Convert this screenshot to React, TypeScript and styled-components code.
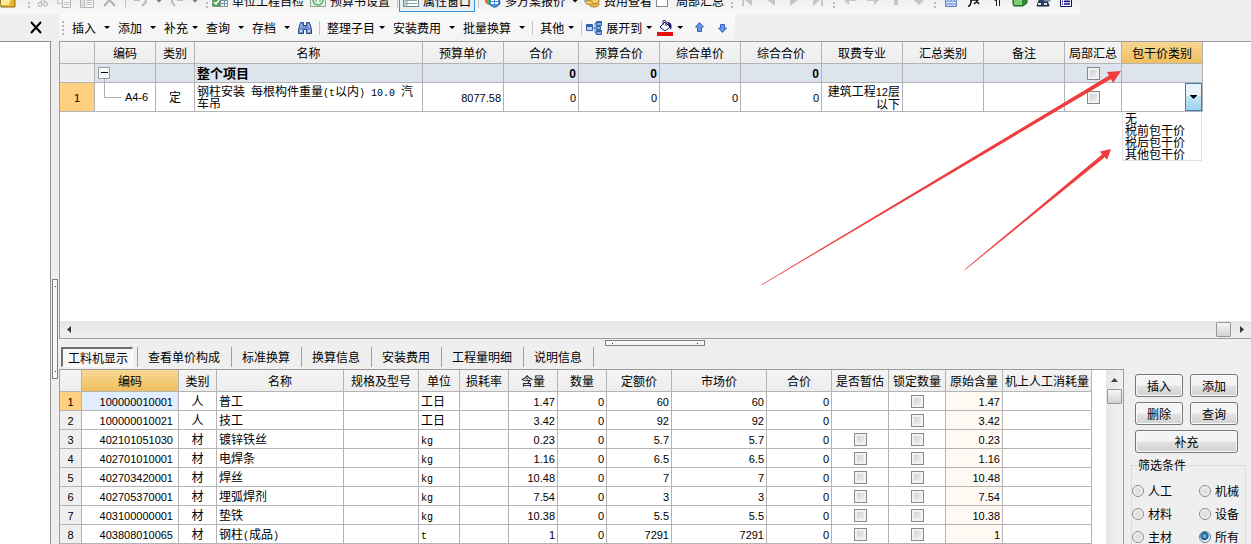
import React from "react";
import styled, { createGlobalStyle, css } from "styled-components";

const GlobalStyle = createGlobalStyle`
  *, *::before, *::after { box-sizing: border-box; }
  html, body, #root { height: 100%; }
  body { margin: 0; background: #efefef; overflow: hidden; }
  body, button, input, select {
    font-family: "Noto Sans CJK SC", "Liberation Sans", sans-serif;
    font-size: 12px;
    line-height: 16px;
    color: #000;
  }
`;

const line = "#b4b4b4";

/* ---------- shell ---------- */

const Page = styled.div`
  position: relative;
  display: flex;
  flex-direction: column;
  height: 100vh;
  overflow: hidden;
`;

const Body = styled.div`
  display: flex;
  flex: 1;
  min-height: 0;
`;

const SidePane = styled.aside`
  display: flex;
  flex-direction: column;
  width: 51px;
  flex: none;
`;

const SideHeader = styled.div`
  display: flex;
  align-items: center;
  justify-content: flex-end;
  height: 27px;
  padding-right: 8px;
`;

const SideBody = styled.div`
  flex: 1;
  background: #fff;
  border-top: 1px solid #8f8f8f;
  border-right: 1px solid #8f8f8f;
`;

const PlainButton = styled.button`
  display: flex;
  align-items: center;
  padding: 0;
  border: 0;
  background: none;
  white-space: nowrap;
`;

const Gutter = styled.div`
  display: flex;
  flex-direction: column;
  align-items: center;
  width: 8px;
  flex: none;
  padding-top: 265px;
`;

const handle = css`
  display: flex;
  justify-content: space-between;
  border: 1px solid #808080;
  background: #f6f6f6;
  &::before, &::after {
    content: "";
    width: 1px;
    height: 1px;
    background: #333;
  }
`;

const VHandle = styled.div`
  ${handle}
  flex-direction: column;
  align-items: center;
  width: 6px;
  height: 100px;
  padding: 6px 0;
`;

const Main = styled.main`
  display: flex;
  flex-direction: column;
  flex: 1;
  min-width: 0;
`;

/* ---------- toolbars ---------- */

const TopBar = styled.div`
  display: flex;
  align-items: flex-end;
  align-self: flex-start;
  height: 14px;
  flex: none;
  overflow: hidden;
  padding: 0 6px 4px 0;
  background: linear-gradient(#f1f1f1, #f8f8f8);
`;

const ToolGroup = styled.div<{ $gap?: number; $pad?: number }>`
  display: flex;
  align-items: center;
  gap: ${(p) => p.$gap ?? 4}px;
  padding-left: ${(p) => p.$pad ?? 0}px;
  height: 18px;
  flex: none;
  white-space: nowrap;
`;

const Grip = styled.span`
  width: 2px;
  height: 14px;
  flex: none;
  background: repeating-linear-gradient(#b9b9b9 0 2px, transparent 2px 4px);
`;

const Divider = styled.span`
  width: 1px;
  height: 14px;
  flex: none;
  background: #c4c4c4;
`;

const Active = styled(PlainButton)`
  gap: 4px;
  height: 22px;
  padding: 0 3px;
  border: 1px solid #3c93dc;
  background: #e6eff8;
`;

const CheckLabel = styled.label`
  display: flex;
  align-items: center;
  gap: 8px;
`;

const ToolBar = styled.div`
  display: flex;
  align-items: center;
  align-self: flex-start;
  height: 27px;
  flex: none;
  padding: 0 6px 0 3px;
  background: linear-gradient(#fafafa, #f3f3f3);
`;

const MenuButton = styled(PlainButton)<{ $tight?: boolean; $near?: boolean }>`
  gap: ${(p) => (p.$tight ? 4 : 8)}px;
  margin-left: ${(p) => (p.$near ? 5 : 8)}px;
`;

const Caret = styled.span<{ $dim?: boolean; $large?: boolean }>`
  width: ${(p) => (p.$large ? 8 : 6)}px;
  height: ${(p) => (p.$large ? 4 : 3)}px;
  flex: none;
  background: ${(p) => (p.$dim ? "#777" : "#000")};
  clip-path: polygon(0 0, 100% 0, 50% 100%);
`;

const BarDivider = styled(Divider)`
  margin: 0 -1px 0 7px;
`;

const IconButton = styled(PlainButton)<{ $far?: boolean }>`
  margin-left: ${(p) => (p.$far ? 10 : 8)}px;
`;

/* ---------- grids ---------- */

const Upper = styled.section`
  display: flex;
  flex-direction: column;
  height: 298px;
  flex: none;
  background: #fff;
  border-top: 1px solid #9c9c9c;
  border-left: 1px solid #9c9c9c;
  border-bottom: 1px solid #9c9c9c;
`;

const GridView = styled.div`
  flex: 1;
  min-height: 0;
  overflow: hidden;
`;

const Grid = styled.table`
  table-layout: fixed;
  border-collapse: separate;
  border-spacing: 0;
  width: 0;
  line-height: 12px;
`;

const Th = styled.th<{ $on?: boolean }>`
  height: 22px;
  padding: 0;
  font-weight: normal;
  white-space: nowrap;
  background: ${(p) => (p.$on ? "linear-gradient(#f7d794, #efbf5f)" : "linear-gradient(#f4f4f4, #ededed)")};
  border-right: 1px solid ${line};
  border-bottom: 1px solid ${line};
`;

const Td = styled.td<{ $align?: string; $h?: number; $bg?: string; $pad?: number }>`
  height: ${(p) => p.$h ?? 19}px;
  padding: 0 ${(p) => p.$pad ?? 2}px;
  text-align: ${(p) => p.$align ?? "left"};
  background: ${(p) => p.$bg ?? "#fff"};
  border-right: 1px solid ${line};
  border-bottom: 1px solid ${line};
  white-space: ${(p) => (p.$h ? "normal" : "nowrap")};
  line-height: 12px;
`;

const Num = styled.span`
  font-family: "Liberation Sans", sans-serif;
  font-size: 11px;
`;

const Mono = styled.span`
  font-family: "Liberation Mono", monospace;
  font-size: 10px;
  line-height: 1px;
`;

const Strong = styled.strong`
  font-size: 13px;
`;

const StrongNum = styled.strong`
  font-family: "Liberation Sans", sans-serif;
  font-size: 12px;
`;

const CheckBox = styled.input.attrs({ type: "checkbox" })<{ $plain?: boolean }>`
  appearance: none;
  display: block;
  width: ${(p) => (p.$plain ? 12 : 13)}px;
  height: ${(p) => (p.$plain ? 12 : 13)}px;
  margin: 0 auto;
  border: 1px solid #8a8a8a;
  background: ${(p) => (p.$plain ? "#fff" : "linear-gradient(135deg, #c6cacd, #f8f8f8)")};
  box-shadow: inset 0 0 0 ${(p) => (p.$plain ? 0 : 2)}px #f2f2f2;
`;

const TreeCell = styled.div`
  display: flex;
  align-items: center;
  padding-left: 1px;
`;

const Combo = styled.div`
  position: relative;
  display: flex;
  height: 28px;
`;

const ComboSelect = styled.select`
  appearance: none;
  flex: 1;
  min-width: 0;
  border: 0;
  padding: 0;
  background: #fff;
`;

const ComboButton = styled.span`
  display: flex;
  align-items: center;
  justify-content: center;
  width: 17px;
  border: 1px solid #3c7fb1;
  background: linear-gradient(#e6f4fc 0 45%, #c4e5f6 45%, #9bd1f0);
`;

const Options = styled.ul`
  position: absolute;
  top: 29px;
  left: 0;
  width: 80px;
  margin: 0;
  padding: 0 0 0 2px;
  list-style: none;
  line-height: 12px;
  text-align: left;
  background: #fff;
  border: 1px solid #e2e2e2;
  border-top: 0;
`;

const HScroll = styled.div`
  display: flex;
  align-items: center;
  justify-content: space-between;
  height: 17px;
  flex: none;
  padding: 0 6px;
  background: linear-gradient(#e7e7e7, #efefef);
`;

const ScrollEnd = styled.div`
  display: flex;
  align-items: center;
  gap: 8px;
`;

const Thumb = styled.span`
  width: 15px;
  height: 15px;
  border: 1px solid #979797;
  border-radius: 1px;
  background: linear-gradient(#f6f6f6, #d2d2d2);
`;

const Lower = styled.section`
  display: flex;
  flex-direction: column;
  flex: 1;
  min-height: 0;
`;

const HHandleRow = styled.div`
  display: flex;
  justify-content: center;
  height: 7px;
  padding-top: 1px;
`;

const HHandle = styled.div`
  ${handle}
  align-items: center;
  width: 100px;
  height: 6px;
  padding: 0 6px;
`;

const Tabs = styled.div`
  display: flex;
  align-items: center;
  height: 23px;
  flex: none;
  padding: 0 0 1px 2px;
`;

const Tab = styled.button<{ $on?: boolean }>`
  height: 20px;
  padding: 0;
  border: 0;
  margin: 0 11px 0 10px;
  background: none;
  white-space: nowrap;
  ${(p) =>
    p.$on &&
    css`
      margin: 0 4px 0 0;
      padding: 0 4px 0 5px;
      border: 1px solid #fff;
      border-top: 2px solid #6e6e6e;
      border-left: 2px solid #6e6e6e;
      background: #f6f6f6;
    `}
`;

const TabLine = styled.span`
  width: 1px;
  height: 20px;
  background: #a0a0a0;
`;

const LowerBody = styled.div`
  display: flex;
  flex: 1;
  min-height: 0;
`;

const LowerGrid = styled.div`
  display: flex;
  flex: 1;
  min-width: 0;
  background: #fff;
  border: 1px solid #9c9c9c;
  border-bottom: 0;
  overflow: hidden;
`;

const VScroll = styled.div`
  display: flex;
  flex-direction: column;
  align-items: center;
  gap: 7px;
  width: 17px;
  flex: none;
  padding-top: 8px;
  background: linear-gradient(90deg, #e7e7e7, #f1f1f1);
`;

const Actions = styled.aside`
  display: flex;
  flex-direction: column;
  width: 127px;
  flex: none;
  padding: 4px 5px 0 7px;
`;

const ButtonGrid = styled.div`
  display: grid;
  grid-template-columns: 1fr 1fr;
  gap: 5px 7px;
  padding: 1px 8px 0 4px;
`;

const ActionButton = styled.button<{ $wide?: boolean }>`
  grid-column: ${(p) => (p.$wide ? "span 2" : "auto")};
  height: 23px;
  padding: 0;
  border: 1px solid #787878;
  border-radius: 3px;
  background: linear-gradient(#f4f4f4 0 48%, #e2e2e2 52%, #d2d2d2);
  box-shadow: inset 0 0 0 1px #fafafa;
`;

const Filter = styled.fieldset`
  display: grid;
  grid-template-columns: 67px 1fr;
  row-gap: 7px;
  min-width: 0;
  height: 100px;
  margin: 4px 0 0;
  padding: 10px 0 0;
  border: 1px solid #dcdcdc;
  border-bottom: 0;
  align-content: start;
`;

const Legend = styled.legend`
  margin-left: 5px;
  padding: 0 1px;
`;

const RadioLabel = styled.label`
  display: flex;
  align-items: center;
  gap: 4px;
  white-space: nowrap;
`;

const Radio = styled.input.attrs({ type: "radio" })`
  appearance: none;
  width: 12px;
  height: 12px;
  margin: 0;
  border: 1px solid #8c8c8c;
  border-radius: 50%;
  background: radial-gradient(#dedede 0 30%, #f6f6f6 70%);
  &:checked {
    border-color: #5c7f9c;
    background: radial-gradient(circle at 45% 40%, #5fb4e4 0 10%, #15507e 45%, #e8f0f6 56%);
  }
`;

const Marks = styled.svg`
  position: absolute;
  left: 0;
  top: 0;
  pointer-events: none;
`;

/* ---------- icons ---------- */

const Svg = ({ w = 16, h = 16, children }: { w?: number; h?: number; children: React.ReactNode }) => (
  <svg width={w} height={h} viewBox={`0 0 ${w} ${h}`} fill="none" aria-hidden="true">
    {children}
  </svg>
);

const FolderIcon = () => (
  <Svg>
    <path d="M0 1h15v13H1z" fill="#e8b52f" stroke="#8f6a12" />
    <path d="M1 2h11L9 12H1z" fill="#fdeaa0" />
  </Svg>
);
const CutIcon = () => (
  <Svg w={12}>
    <path d="M3 0l5 9M9 0L4 9" stroke="#a8a8a8" />
    <circle cx="3" cy="11.5" r="2" stroke="#a8a8a8" />
    <circle cx="8.5" cy="11" r="2" stroke="#a8a8a8" />
  </Svg>
);
const CopyIcon = () => (
  <Svg>
    <path d="M1.500 .5h8v10h-8z" fill="#f0f0f0" stroke="#bdbdbd" />
    <path d="M6.500 3.500h8v11h-8z" fill="#f4f4f4" stroke="#b5b5b5" />
    <path d="M8 6.500h5M8 9.500h5M8 11.500h5" stroke="#c4c4c4" />
  </Svg>
);
const PasteIcon = () => (
  <Svg>
    <path d="M1.500 .5h11v14h-11z" fill="#e2e2e2" stroke="#b5b5b5" />
    <path d="M5.500 4.500h9v10h-9z" fill="#f6f6f6" stroke="#b5b5b5" />
    <path d="M7 7.500h6M7 9.500h6M7 11.500h6" stroke="#c4c4c4" />
  </Svg>
);
const DeleteIcon = () => (
  <Svg>
    <path d="M2 1l11 12M13 1L2 13" stroke="#b0b0b0" strokeWidth="2" />
  </Svg>
);
const UndoIcon = ({ flip }: { flip?: boolean }) => (
  <Svg>
    <path
      d={flip ? "M13 2v5H8M13 7C9 2 3 4 3 9l3 4" : "M2 2v5h5M2 7c4-5 11-3 11 2l-4 4"}
      stroke="#bababa"
      strokeWidth="2"
    />
  </Svg>
);
const SheetCheckIcon = () => (
  <Svg>
    <path d="M.5 1.500h15v12H.5z" fill="#eef4ee" stroke="#7c9a86" />
    <path d="M8 7.500h7M8 10.500h7M8.500 2v11M12.500 2v11" stroke="#7897ac" />
    <path d="M1 6h7v7H1z" fill="#4ba83c" />
    <path d="M2 9l2 2 3-4" stroke="#fff" strokeWidth="1.500" />
  </Svg>
);
const GearSheetIcon = () => (
  <Svg>
    <path d="M.5 .5h15v13H.5z" fill="#e3f2e3" stroke="#8aa894" />
    <circle cx="8" cy="7" r="5" stroke="#57ab68" strokeWidth="1.500" />
    <path d="M6 9V6l2-2 2 2v3" stroke="#57ab68" />
  </Svg>
);
const PropsIcon = () => (
  <Svg>
    <path d="M.5 1.500h15v12H.5z" fill="#fff" stroke="#6f8a8f" />
    <path d="M1 2h4v11H1z" fill="#b8d6c2" />
    <path d="M2 4.500h12M2 7.500h12M2 10.500h12" stroke="#8aa3ad" />
  </Svg>
);
const QuoteIcon = () => (
  <Svg>
    <path d="M4 1h10l1 10-4 3H8l-4-3z" fill="#4c8fdd" stroke="#2a62ab" />
    <path d="M6 3h7v8H6z" fill="#fff" />
    <path d="M6 5.500h7M6 8.500h7M9.500 3v8" stroke="#4c8fdd" />
    <path d="M0 3h2v8L0 9z" fill="#e06a2a" />
    <path d="M2 4h2v8l-2-1z" fill="#58b158" />
  </Svg>
);
const CoinsIcon = () => (
  <Svg>
    <path d="M0 1h8v8H0z" fill="#8cb5dd" />
    <ellipse cx="10" cy="11" rx="5" ry="3" fill="#e9bb4b" stroke="#a97f20" />
    <ellipse cx="10" cy="8" rx="5" ry="3" fill="#f3cf6c" stroke="#a97f20" />
    <ellipse cx="5" cy="9.500" rx="3.500" ry="2" fill="#f3cf6c" stroke="#b98c2a" />
  </Svg>
);
const NavIcon = ({ d }: { d: string }) => (
  <Svg>
    <path d={d} fill="#c6c6c6" />
  </Svg>
);
const CalcIcon = () => (
  <Svg>
    <path d="M2.500 .5h11v13h-11z" fill="#a9c3ee" stroke="#6580b8" />
    <path d="M4 7h8M4 9.500h8M4 12h8" stroke="#fff" strokeDasharray="2 1" />
    <path d="M4 8h8M4 11h8" stroke="#5c7fc9" strokeDasharray="2 1" />
  </Svg>
);
const FxIcon = () => (
  <Svg>
    <path d="M2 13c3 1 3-6 5-12h3M4 7h6M8 11l6-6M9 6l4 5" stroke="#111" strokeWidth="1.500" />
  </Svg>
);
const ParaIcon = () => (
  <Svg>
    <path d="M7.500 1v12M10.500 1v12M5 1.500h8" stroke="#222" />
    <path d="M4 2h3v6C5 8 4 6 4 2z" fill="#222" />
  </Svg>
);
const CubeIcon = () => (
  <Svg>
    <path d="M1 2l9-1 5 1v8l-4 3H2l-1-2z" fill="#2f8b31" stroke="#175a1c" />
    <path d="M2 3h8v9H2z" fill="#7fd06c" />
  </Svg>
);
const FindIcon = () => (
  <Svg>
    <path d="M2 13l3-8h6l3 8z" fill="#2d3f5c" stroke="#16202f" />
    <path d="M3 10h3v2H3zM9 10h3v2H9z" fill="#cfe0f7" />
    <path d="M9 2h6v6H9z" fill="#a7bfe4" stroke="#54709c" />
  </Svg>
);
const BinocularsIcon = () => (
  <Svg w={14}>
    <path d="M2.500 2.500h3v3h3v-3h3l2 7v4h-5v-4h-3v4h-5v-4z" fill="#6b8dcc" stroke="#2c4a86" />
    <path d="M2 10h2v2H2zM10 10h2v2h-2z" fill="#cfe0f7" />
    <path d="M3.500 4l-1 4M10.500 4l1 4" stroke="#b7cdf2" />
  </Svg>
);
const ListIcon = () => (
  <Svg>
    <path d="M2.500 .5h11v13h-11z" fill="#fff" stroke="#10105c" />
    <path d="M4 3.500h1M4 6.500h1M4 8.500h1M4 11h1M6 3.500h6M6 6.500h6M6 8.500h6M6 11h6" stroke="#10108c" strokeWidth="1.500" />
  </Svg>
);
const TreeIcon = () => (
  <Svg>
    <path d="M6 8h3M9 3v10M9 3h2M9 8h2M9 13h2" stroke="#4a78b8" />
    <path d="M.5 4.500h6v6h-6z" fill="#b4d0f2" stroke="#2f62a8" />
    <path d="M10.500 1.500h5v4h-5zM10.500 10.500h5v4h-5z" fill="#7fb0e8" stroke="#2f62a8" />
    <path d="M10.500 6.500h4v3h-4z" fill="#7fb0e8" stroke="#2f62a8" />
    <path d="M1 5h5v2H1zM11 2h4v1h-4zM11 11h4v1h-4z" fill="#2f62a8" />
  </Svg>
);
const FillIcon = () => (
  <Svg h={18}>
    <path d="M3 8l5-5 5 5-5 4z" fill="#fff" stroke="#16166a" />
    <path d="M6 6V2c0-1 3-1 3 1v4" stroke="#16166a" />
    <path d="M10 3c5 0 5 4 4 8l-2-4z" fill="#16166a" />
    <path d="M0 13h16v4H0z" fill="#e60f0f" />
  </Svg>
);
const ArrowIcon = ({ down }: { down?: boolean }) => (
  <Svg w={13} h={13}>
    <path
      d={down ? "M6.500 11.500l4-4.500H8.500V3.500h-4V7H2.500z" : "M6.500 1.500l4 4.500H8.500v4.500h-4V6H2.500z"}
      fill="#6595ea"
      stroke="#3564c4"
    />
  </Svg>
);
const CloseIcon = () => (
  <Svg w={14} h={14}>
    <path d="M2 1l10 11M12 1L2 12" stroke="#000" strokeWidth="2" />
  </Svg>
);

/* ---------- data ---------- */

const upperCols: [string, number][] = [
  ["", 35], ["编码", 61], ["类别", 39], ["名称", 228], ["预算单价", 81], ["合价", 75], ["预算合价", 81],
  ["综合单价", 81], ["综合合价", 81], ["取费专业", 81], ["汇总类别", 81], ["备注", 81], ["局部汇总", 57], ["包干价类别", 81],
];

const lowerCols: [string, number][] = [
  ["", 22], ["编码", 97], ["类别", 38], ["名称", 127], ["规格及型号", 75], ["单位", 41], ["损耗率", 49], ["含量", 49],
  ["数量", 49], ["定额价", 65], ["市场价", 95], ["合价", 65], ["是否暂估", 57], ["锁定数量", 57], ["原始含量", 57],
  ["机上人工消耗量", 89],
];

const materials: [string, string, string, string, string, string, boolean][] = [
  ["100000010001", "人", "普工", "工日", "1.47", "60", false],
  ["100000010021", "人", "技工", "工日", "3.42", "92", false],
  ["402101051030", "材", "镀锌铁丝", "kg", "0.23", "5.7", true],
  ["402701010001", "材", "电焊条", "kg", "1.16", "6.5", true],
  ["402703420001", "材", "焊丝", "kg", "10.48", "7", true],
  ["402705370001", "材", "埋弧焊剂", "kg", "7.54", "3", true],
  ["403100000001", "材", "垫铁", "kg", "10.38", "5.5", true],
  ["403808010065", "材", "钢柱(成品)", "t", "1", "7291", true],
];

const tabs = ["查看单价构成", "标准换算", "换算信息", "安装费用", "工程量明细", "说明信息"];

const options = ["无", "税前包干价", "税后包干价", "其他包干价"];

const mixed = (text: string) =>
  text.split(/([\x20-\x7e]+)/).map((part, i) => (i % 2 ? <Mono key={i}>{part}</Mono> : part));

const Head = ({ cols, active }: { cols: [string, number][]; active: number }) => (
  <>
    <colgroup>
      {cols.map(([, w], i) => (
        <col key={i} width={w} />
      ))}
    </colgroup>
    <thead>
      <tr>
        {cols.map(([name], i) => (
          <Th key={i} $on={i === active}>
            {name}
          </Th>
        ))}
      </tr>
    </thead>
  </>
);

const summary = "#dde4ee";
const marker = "#ffd080";

const UpperTable = () => (
  <Grid>
    <Head cols={upperCols} active={13} />
    <tbody>
      <tr>
        <Td $bg="#efefef" />
        <Td $bg={summary}>
          <TreeCell>
            <Svg w={12} h={18}>
              <path d="M.5 3.500h11v11H.5z" fill="#f8f8f8" stroke="#9a9a9a" />
              <path d="M3 8.500h7" stroke="#000" />
              <path d="M6.500 15v3" stroke="#b0b0b0" />
            </Svg>
          </TreeCell>
        </Td>
        <Td $bg={summary} />
        <Td $bg={summary}>
          <Strong>整个项目</Strong>
        </Td>
        <Td $bg={summary} />
        {["0", "0", "", "0"].map((v, i) => (
          <Td key={i} $bg={summary} $align="right">
            <StrongNum>{v}</StrongNum>
          </Td>
        ))}
        <Td $bg={summary} />
        <Td $bg={summary} />
        <Td $bg={summary} />
        <Td $bg={summary}>
          <CheckBox aria-label="局部汇总" />
        </Td>
        <Td $bg={summary} />
      </tr>
      <tr>
        <Td $h={29} $align="center" $bg={marker}>
          <Num>1</Num>
        </Td>
        <Td $h={29}>
          <TreeCell>
            <Svg w={27} h={28}>
              <path d="M6.500 0v14.500H23" stroke="#b0b0b0" />
            </Svg>
            <Num>A4-6</Num>
          </TreeCell>
        </Td>
        <Td $h={29} $align="center">定</Td>
        <Td $h={29}>{mixed("钢柱安装 每根构件重量(t以内) 10.0 汽车吊")}</Td>
        {["8077.58", "0", "0", "0", "0"].map((v, i) => (
          <Td key={i} $h={29} $align="right">
            <Num>{v}</Num>
          </Td>
        ))}
        <Td $h={29} $align="right">
          建筑工程<Num>12</Num>层以下
        </Td>
        <Td $h={29} />
        <Td $h={29} />
        <Td $h={29}>
          <CheckBox aria-label="局部汇总" />
        </Td>
        <Td $h={29} $pad={0}>
          <Combo>
            <ComboSelect aria-label="包干价类别" defaultValue="">
              <option value="" />
            </ComboSelect>
            <ComboButton>
              <Caret $large />
            </ComboButton>
            <Options role="listbox" aria-label="包干价类别">
              {options.map((o) => (
                <li key={o} role="option" aria-selected="false">
                  {o}
                </li>
              ))}
            </Options>
          </Combo>
        </Td>
      </tr>
    </tbody>
  </Grid>
);

const LowerTable = () => (
  <Grid>
    <Head cols={lowerCols} active={1} />
    <tbody>
      {materials.map(([code, kind, name, unit, qty, price, est], i) => (
        <tr key={code}>
          <Td $align="center" $bg={i === 0 ? marker : "#efefef"}>
            <Num>{i + 1}</Num>
          </Td>
          <Td $align="right" $pad={5} $bg={i === 0 ? "#e0eeff" : undefined}>
            <Num>{code}</Num>
          </Td>
          <Td $align="center">{kind}</Td>
          <Td>{mixed(name)}</Td>
          <Td />
          <Td>{mixed(unit)}</Td>
          <Td />
          <Td $align="right"><Num>{qty}</Num></Td>
          <Td $align="right"><Num>0</Num></Td>
          <Td $align="right"><Num>{price}</Num></Td>
          <Td $align="right"><Num>{price}</Num></Td>
          <Td $align="right"><Num>0</Num></Td>
          <Td>{est && <CheckBox aria-label="是否暂估" />}</Td>
          <Td>
            <CheckBox aria-label="锁定数量" />
          </Td>
          <Td $align="right" $bg="#fff9f4"><Num>{qty}</Num></Td>
          <Td />
        </tr>
      ))}
    </tbody>
  </Grid>
);

const Menu = ({ text, tight }: { text: string; tight?: boolean }) => (
  <MenuButton $tight={tight}>
    {text}
    <Caret />
  </MenuButton>
);

export default function App() {
  return (
    <Page>
      <GlobalStyle />
      <TopBar>
        <ToolGroup $gap={7}>
          <FolderIcon />
          <ToolGroup $pad={5}>
            <Grip />
          </ToolGroup>
          <CutIcon />
          <CopyIcon />
          <PasteIcon />
          <DeleteIcon />
          <Divider />
          <UndoIcon />
          <Caret $dim />
          <UndoIcon flip />
          <Caret $dim />
        </ToolGroup>
        <ToolGroup $pad={8}>
          <Grip />
          <SheetCheckIcon />
          <span>单位工程自检</span>
        </ToolGroup>
        <ToolGroup $pad={6}>
          <GearSheetIcon />
          <span>预算书设置</span>
        </ToolGroup>
        <ToolGroup $pad={7} $gap={1}>
          <Divider />
          <Active>
            <PropsIcon />
            属性窗口
          </Active>
        </ToolGroup>
        <ToolGroup $pad={3}>
          <Divider />
        </ToolGroup>
        <ToolGroup $pad={6}>
          <QuoteIcon />
          <span>多方案报价</span>
          <ToolGroup $pad={3}>
            <Caret />
          </ToolGroup>
        </ToolGroup>
        <ToolGroup $pad={6}>
          <CoinsIcon />
          <span>费用查看</span>
          <CheckLabel>
            <CheckBox $plain />
            局部汇总
          </CheckLabel>
        </ToolGroup>
        <ToolGroup $pad={7} $gap={7}>
          <Grip />
          <NavIcon d="M2 1h2v12H2zM12 1v12L5 7z" />
          <NavIcon d="M12 1v12L4 7z" />
          <NavIcon d="M4 1v12l8-6z" />
          <NavIcon d="M4 1v12l7-6zM12 1h2v12h-2z" />
        </ToolGroup>
        <ToolGroup $pad={8} $gap={7}>
          <Grip />
          <NavIcon d="M1 6l6-6v4h7v4H7v4z" />
          <NavIcon d="M15 6L9 0v4H2v4h7v4z" />
          <NavIcon d="M8 0l5 6h-3v6H6V6H3z" />
          <NavIcon d="M8 12l6-6h-4V0H6v6H2z" />
        </ToolGroup>
        <ToolGroup $pad={7} $gap={7}>
          <Grip />
          <CalcIcon />
          <FxIcon />
          <ParaIcon />
          <CubeIcon />
          <FindIcon />
          <ListIcon />
        </ToolGroup>
      </TopBar>
      <Body>
        <SidePane>
          <SideHeader>
            <PlainButton aria-label="关闭">
              <CloseIcon />
            </PlainButton>
          </SideHeader>
          <SideBody />
        </SidePane>
        <Gutter>
          <VHandle />
        </Gutter>
        <Main>
          <ToolBar>
            <Grip />
            <Menu text="插入" />
            <Menu text="添加" />
            <Menu text="补充" tight />
            <Menu text="查询" />
            <Menu text="存档" />
            <IconButton aria-label="查找">
              <BinocularsIcon />
            </IconButton>
            <BarDivider />
            <Menu text="整理子目" tight />
            <Menu text="安装费用" />
            <Menu text="批量换算" />
            <BarDivider />
            <Menu text="其他" tight />
            <BarDivider />
            <MenuButton $tight $near>
              <TreeIcon />
              展开到
              <Caret />
            </MenuButton>
            <MenuButton $tight $near>
              <FillIcon />
              <Caret />
            </MenuButton>
            <IconButton $far aria-label="上移">
              <ArrowIcon />
            </IconButton>
            <IconButton $far aria-label="下移">
              <ArrowIcon down />
            </IconButton>
          </ToolBar>
          <Upper>
            <GridView>
              <UpperTable />
            </GridView>
            <HScroll>
              <Svg w={6} h={7}>
                <path d="M5 0v7L1 3.500z" fill="#333" />
              </Svg>
              <ScrollEnd>
                <Thumb />
                <Svg w={6} h={7}>
                  <path d="M1 0v7l4-3.500z" fill="#333" />
                </Svg>
              </ScrollEnd>
            </HScroll>
          </Upper>
          <Lower>
            <HHandleRow>
              <HHandle />
            </HHandleRow>
            <Tabs role="tablist">
              <Tab $on role="tab" aria-selected="true">
                工料机显示
              </Tab>
              <TabLine />
              {tabs.map((t) => (
                <React.Fragment key={t}>
                  <Tab role="tab" aria-selected="false">
                    {t}
                  </Tab>
                  <TabLine />
                </React.Fragment>
              ))}
            </Tabs>
            <LowerBody>
              <LowerGrid>
                <GridView>
                  <LowerTable />
                </GridView>
                <VScroll>
                  <Svg w={7} h={4}>
                    <path d="M0 4h7L3.500 0z" fill="#444" />
                  </Svg>
                  <Thumb />
                </VScroll>
              </LowerGrid>
              <Actions>
                <ButtonGrid>
                  <ActionButton>插入</ActionButton>
                  <ActionButton>添加</ActionButton>
                  <ActionButton>删除</ActionButton>
                  <ActionButton>查询</ActionButton>
                  <ActionButton $wide>补充</ActionButton>
                </ButtonGrid>
                <Filter>
                  <Legend>筛选条件</Legend>
                  {["人工", "机械", "材料", "设备", "主材", "所有"].map((t) => (
                    <RadioLabel key={t}>
                      <Radio name="filter" defaultChecked={t === "所有"} />
                      {t}
                    </RadioLabel>
                  ))}
                </Filter>
              </Actions>
            </LowerBody>
          </Lower>
        </Main>
      </Body>
      <Marks width="1251" height="544" aria-hidden="true">
        <path d="M761.500 284.500L1109 75.500l-2-3.500L1121 71l-8 12-2-4L762 285z" fill="#f03c3c" />
        <path d="M964.500 269.500L1102 154.500l-2-3 11-2.500-4 11-2-3L965 270z" fill="#f03c3c" />
      </Marks>
    </Page>
  );
}
